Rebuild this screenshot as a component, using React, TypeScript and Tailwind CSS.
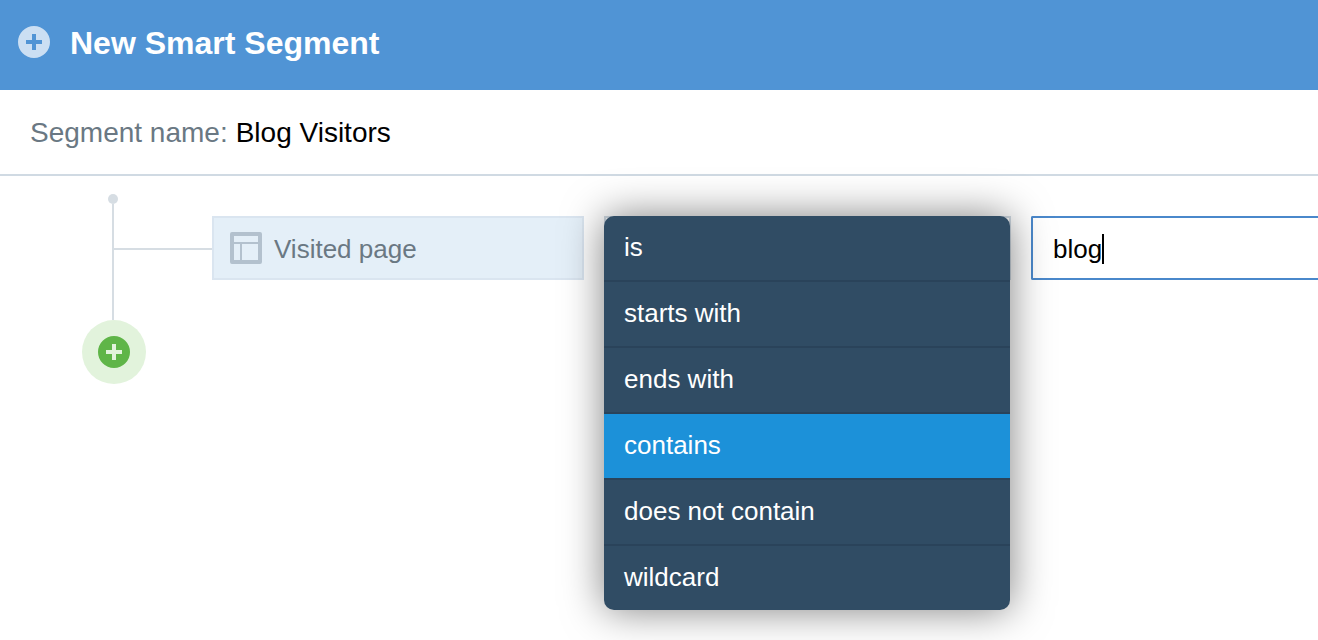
import { useState } from 'react';

const OPERATORS: string[] = [
  'is',
  'starts with',
  'ends with',
  'contains',
  'does not contain',
  'wildcard',
];

function PlusCircle({ className }: { className: string }) {
  return (
    <svg viewBox="0 0 32 32" className={`size-8 shrink-0 ${className}`} aria-hidden="true">
      <path
        fillRule="evenodd"
        fill="currentColor"
        d="M16 0a16 16 0 1 1 0 32a16 16 0 0 1 0-32zM14 8v6H8v4h6v6h4v-6h6v-4h-6V8z"
      />
    </svg>
  );
}

function PageIcon() {
  return (
    <svg viewBox="0 0 32 32" className="size-8 shrink-0 text-[#b3c1ce]" aria-hidden="true">
      <path
        fillRule="evenodd"
        fill="currentColor"
        d="M2 0h28a2 2 0 0 1 2 2v28a2 2 0 0 1-2 2H2a2 2 0 0 1-2-2V2a2 2 0 0 1 2-2zM4 4v6h24V4zM4 12v16h6V12zM12 12v16h16V12z"
      />
    </svg>
  );
}

export default function App() {
  const [name, setName] = useState('Blog Visitors');
  const [operator, setOperator] = useState('contains');
  const [value, setValue] = useState('blog');

  return (
    <div className="min-h-screen overflow-hidden bg-white font-['Liberation_Sans',Arial,sans-serif] text-[26px] leading-8 text-black">
      <header className="flex items-start gap-5 bg-[#5094d5] px-[18px] pt-[26px] pb-[30px]">
        <PlusCircle className="text-[#cbdff3]" />
        <h1 className="text-[32px] leading-[34px] font-bold text-white">New Smart Segment</h1>
      </header>

      <div className="flex items-center gap-2 border-b-2 border-[#d0dae3] px-[30px] pt-[27px] pb-[25px] text-[28px]">
        <label htmlFor="segment-name" className="text-[#6a7883]">
          Segment name:
        </label>
        <input
          id="segment-name"
          value={name}
          onChange={(event) => setName(event.target.value)}
          className="min-w-0 flex-1 outline-none"
        />
      </div>

      <main className="flex items-start pt-[18px] pl-[82px]">
        {/* Rule tree */}
        <div className="flex w-16 shrink-0 flex-col">
          <div className="flex flex-col items-center pr-0.5">
            <span className="size-2.5 rounded-full bg-[#d6dde3]" />
            <span className="h-29 w-0.5 bg-[#d6dde3]" />
          </div>
          <button
            type="button"
            aria-label="Add rule"
            className="flex size-16 items-center justify-center rounded-full bg-[#e2f3dc]"
          >
            <PlusCircle className="text-[#5fb548]" />
          </button>
        </div>

        <div className="-ml-8 flex min-w-0 flex-1 items-start pt-[22px]">
          <span className="mt-8 h-0.5 w-[98px] shrink-0 bg-[#d6dde3]" />

          <div className="grid flex-1 grid-cols-[372fr_407fr_287fr] gap-5">
            <button
              type="button"
              className="flex h-16 items-center gap-3 border-2 border-[#dae5f0] bg-[#e4eff8] px-4 text-[#6a7883]"
            >
              <PageIcon />
              <span className="pt-0.5">Visited page</span>
            </button>

            <div className="relative">
              <select
                aria-label="Operator"
                value={operator}
                onChange={(event) => setOperator(event.target.value)}
                className="h-16 w-full appearance-none border-2 border-[#d0dae3] px-4"
              >
                {OPERATORS.map((item) => (
                  <option key={item}>{item}</option>
                ))}
              </select>

              {/* Open operator menu */}
              <ul className="absolute top-0 right-px left-0 z-10 divide-y-2 divide-[#2a435a] overflow-hidden rounded-[10px] bg-[#304c64] shadow-[0_0_40px_rgba(0,0,0,0.5)]">
                {OPERATORS.map((item) => (
                  <li key={item}>
                    <button
                      type="button"
                      onClick={() => setOperator(item)}
                      className={`block h-16 w-full px-5 pb-0.5 text-left text-white ${
                        item === operator ? 'bg-[#1c91d9]' : 'hover:bg-[#2a435a]'
                      }`}
                    >
                      {item}
                    </button>
                  </li>
                ))}
              </ul>
            </div>

            <label className="flex h-16 items-center rounded-l-xs border-2 border-r-0 border-[#4a88cb] bg-white pt-0.5 pl-5">
              <input
                aria-label="Value"
                value={value}
                onChange={(event) => setValue(event.target.value)}
                className="field-sizing-content caret-transparent outline-none"
              />
              <span className="h-[30px] w-0.5 bg-black" />
            </label>
          </div>
        </div>
      </main>
    </div>
  );
}
